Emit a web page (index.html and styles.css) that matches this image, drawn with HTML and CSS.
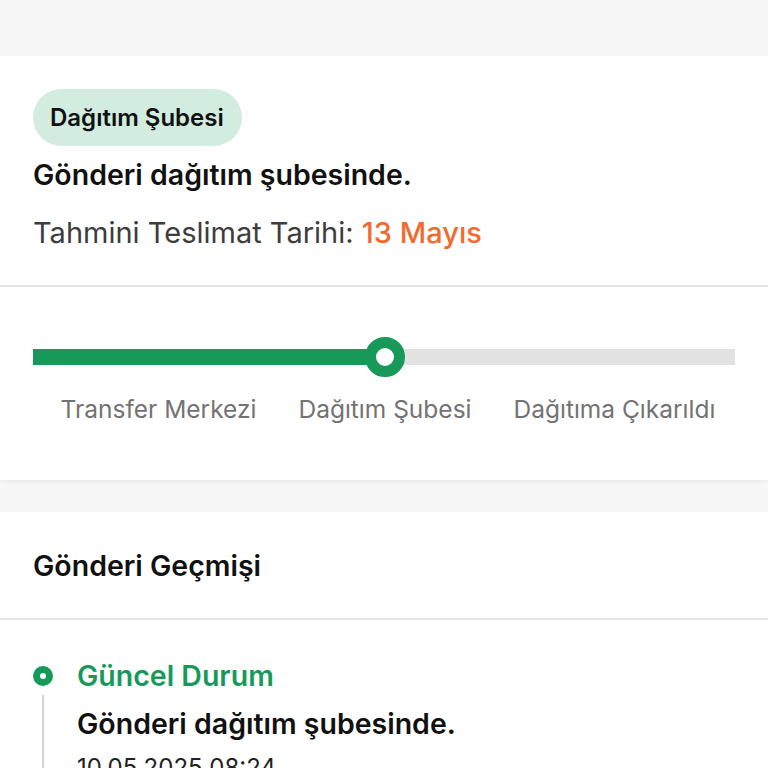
FILE: index.html
```html
<!DOCTYPE html>
<html lang="tr">
<head>
<meta charset="utf-8">
<link rel="stylesheet" href="styles.css">
</head>
<body>
<div class="page">
  <div class="top-band"></div>
  <section class="card status-card">
    <div class="status-info">
      <span class="badge">Dağıtım Şubesi</span>
      <h2 class="status-title">Gönderi dağıtım şubesinde.</h2>
      <p class="eta">Tahmini Teslimat Tarihi: <span class="eta-date">13 Mayıs</span></p>
    </div>
    <div class="progress-wrap">
      <div class="track">
        <div class="track-fill"></div>
        <div class="track-knob"></div>
      </div>
      <div class="steps">
        <span>Transfer Merkezi</span>
        <span>Dağıtım Şubesi</span>
        <span>Dağıtıma Çıkarıldı</span>
      </div>
    </div>
  </section>
  <section class="card history-card">
    <h3 class="history-title">Gönderi Geçmişi</h3>
    <div class="timeline">
      <div class="tl-item">
        <div class="tl-marker">
          <span class="tl-dot"></span>
          <span class="tl-line"></span>
        </div>
        <div class="tl-body">
          <div class="tl-label">Güncel Durum</div>
          <div class="tl-text">Gönderi dağıtım şubesinde.</div>
          <div class="tl-date">10.05.2025 08:24</div>
        </div>
      </div>
    </div>
  </section>
</div>
</body>
</html>
```
FILE: styles.css
```css
* { box-sizing: border-box; }
html, body { margin: 0; padding: 0; }
body {
  background: #f7f7f7;
  font-family: Inter, "Noto Sans", sans-serif;
  color: #111;
  overflow: hidden;
}
.page { width: 768px; }
.top-band { height: 56px; background: #f7f7f7; }
.card { background: #fff; }
.status-card {
  box-shadow: 0 2px 4px rgba(0,0,0,0.06);
  margin-bottom: 32px;
}
.status-info {
  padding: 33px 33px 0;
  height: 231px;
  border-bottom: 2px solid #e4e4e4;
}
.badge {
  display: inline-block;
  background: #d3ece0;
  border-radius: 29px;
  padding: 0 18px 0 17px;
  height: 57px;
  line-height: 57px;
  font-size: 24px;
  font-weight: 600;
  color: #111;
}
.status-title {
  margin: 12px 0 0;
  font-size: 28.5px;
  font-weight: 600;
  line-height: 34px;
}
.eta {
  margin: 24px 0 0;
  font-size: 29px;
  line-height: 34px;
  color: #3d3d3d;
}
.eta-date { color: #f26a2d; font-weight: 500; }
.progress-wrap {
  padding: 62px 33px 0;
  height: 193px;
}
.track {
  position: relative;
  height: 16px;
  background: #e2e2e2;
}
.track-fill {
  width: 352px;
  height: 100%;
  background: #17995a;
}
.track-knob {
  position: absolute;
  left: 332px;
  top: -12px;
  width: 40px;
  height: 40px;
  border-radius: 50%;
  background: #fff;
  border: 11px solid #17995a;
}
.steps {
  display: flex;
  justify-content: center;
  gap: 42px;
  margin-top: 29px;
  padding-left: 8px;
  font-size: 24.5px;
  color: #737373;
  line-height: 30px;
  white-space: nowrap;
}
.history-title {
  margin: 0;
  padding: 0 33px;
  height: 108px;
  display: flex;
  align-items: center;
  font-size: 28.5px;
  font-weight: 600;
  border-bottom: 2px solid #e4e4e4;
}
.timeline { padding: 38px 33px 0; }
.tl-item { display: flex; gap: 24px; }
.tl-marker {
  width: 20px;
  display: flex;
  flex-direction: column;
  align-items: center;
  padding-top: 8px;
}
.tl-dot {
  width: 20px;
  height: 20px;
  border-radius: 50%;
  border: 7px solid #17995a;
  background: #fff;
}
.tl-line {
  width: 2px;
  flex: 1;
  margin-top: 9px;
  background: #d4d4d4;
}
.tl-label {
  font-size: 28.5px;
  font-weight: 600;
  color: #17995a;
  line-height: 36px;
}
.tl-text {
  margin-top: 13px;
  font-size: 28.5px;
  font-weight: 600;
  line-height: 34px;
}
.tl-date {
  margin-top: 13px;
  font-size: 24px;
  line-height: 28px;
  color: #222;
}
```
